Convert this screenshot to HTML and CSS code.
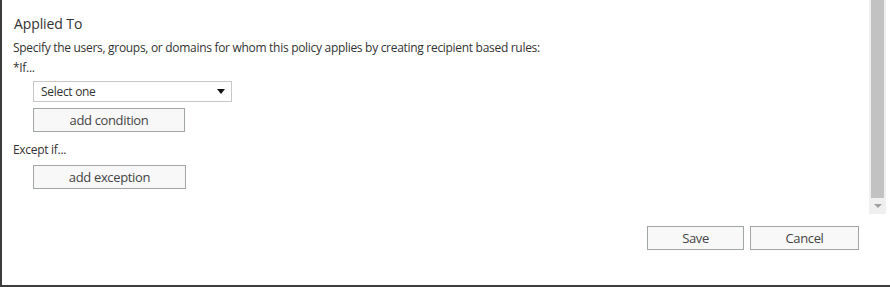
FILE: index.html
```html
<!DOCTYPE html>
<html>
<head>
<meta charset="utf-8">
<link rel="stylesheet" href="styles.css">
</head>
<body>
<div class="frame">
  <div class="main">
    <div class="content">
      <div class="title">Applied To</div>
      <div class="desc">Specify the users, groups, or domains for whom this policy applies by creating recipient based rules:</div>
      <div class="label label-if">*If...</div>
      <div class="indent">
        <div class="select"><span>Select one</span><span class="caret"></span></div>
        <button class="btn btn-cond">add condition</button>
      </div>
      <div class="label label-except">Except if...</div>
      <div class="indent">
        <button class="btn btn-exc">add exception</button>
      </div>
    </div>
    <div class="scrollbar">
      <div class="thumb"></div>
      <div class="arrow"><span class="arrow-tri"></span></div>
    </div>
  </div>
  <div class="footer">
    <button class="btn btn-save">Save</button>
    <button class="btn btn-cancel">Cancel</button>
  </div>
</div>
</body>
</html>
```

FILE: styles.css
```css
html, body {
  margin: 0;
  padding: 0;
  background: #ffffff;
}
body {
  font-family: "Open Sans", "Noto Sans", sans-serif;
  color: #333333;
  width: 890px;
  height: 287px;
  overflow: hidden;
}
.frame {
  box-sizing: border-box;
  width: 890px;
  height: 287px;
  border-left: 2px solid #3c3c3c;
  border-bottom: 2px solid #3c3c3c;
  display: flex;
  flex-direction: column;
}
.main {
  display: flex;
  height: 214px;
}
.content {
  flex: 1;
  padding-left: 11px;
}
.title {
  font-size: 14px;
  line-height: 20px;
  margin-top: 14px;
  padding-left: 1px;
  letter-spacing: -0.1px;
  color: #333;
}
.desc {
  font-size: 12px;
  line-height: 18px;
  margin-top: 5px;
  letter-spacing: -0.3px;
  color: #333;
}
.label {
  font-size: 12px;
  line-height: 18px;
  letter-spacing: -0.3px;
  color: #333;
}
.label-if {
  margin-top: 2px;
}
.label-except {
  margin-top: 9px;
}
.indent {
  padding-left: 20px;
  display: flex;
  flex-direction: column;
  align-items: flex-start;
}
.select {
  box-sizing: border-box;
  width: 199px;
  height: 21px;
  margin-top: 4px;
  border: 1px solid #c8c8c8;
  display: flex;
  align-items: center;
  justify-content: space-between;
  padding: 0 6px 0 7px;
  font-size: 12px;
  letter-spacing: -0.3px;
  color: #333;
}
.caret {
  width: 0;
  height: 0;
  border-left: 4px solid transparent;
  border-right: 4px solid transparent;
  border-top: 5px solid #111;
}
.btn {
  box-sizing: border-box;
  height: 24px;
  border: 1px solid #a0a5a8;
  background: #f8f8f8;
  font-family: "Open Sans", "Noto Sans", sans-serif;
  font-size: 13px;
  letter-spacing: -0.35px;
  color: #444;
  padding: 0;
  margin: 0;
}
.btn-cond {
  width: 152px;
  margin-top: 6px;
}
.btn-exc {
  width: 153px;
  margin-top: 6px;
}
.scrollbar {
  width: 17px;
  margin-right: 4px;
  background: #f0f0f0;
  display: flex;
  flex-direction: column;
  align-items: center;
}
.thumb {
  width: 13px;
  flex: 1;
  background: #c2c2c2;
}
.arrow {
  height: 16px;
  width: 17px;
  display: flex;
  align-items: center;
  justify-content: center;
}
.arrow-tri {
  width: 0;
  height: 0;
  border-left: 4px solid transparent;
  border-right: 4px solid transparent;
  border-top: 4px solid #a0a0a0;
}
.footer {
  display: flex;
  justify-content: flex-end;
  gap: 6px;
  padding-right: 31px;
  margin-top: 12px;
}
.btn-save {
  width: 97px;
}
.btn-cancel {
  width: 109px;
}
```
